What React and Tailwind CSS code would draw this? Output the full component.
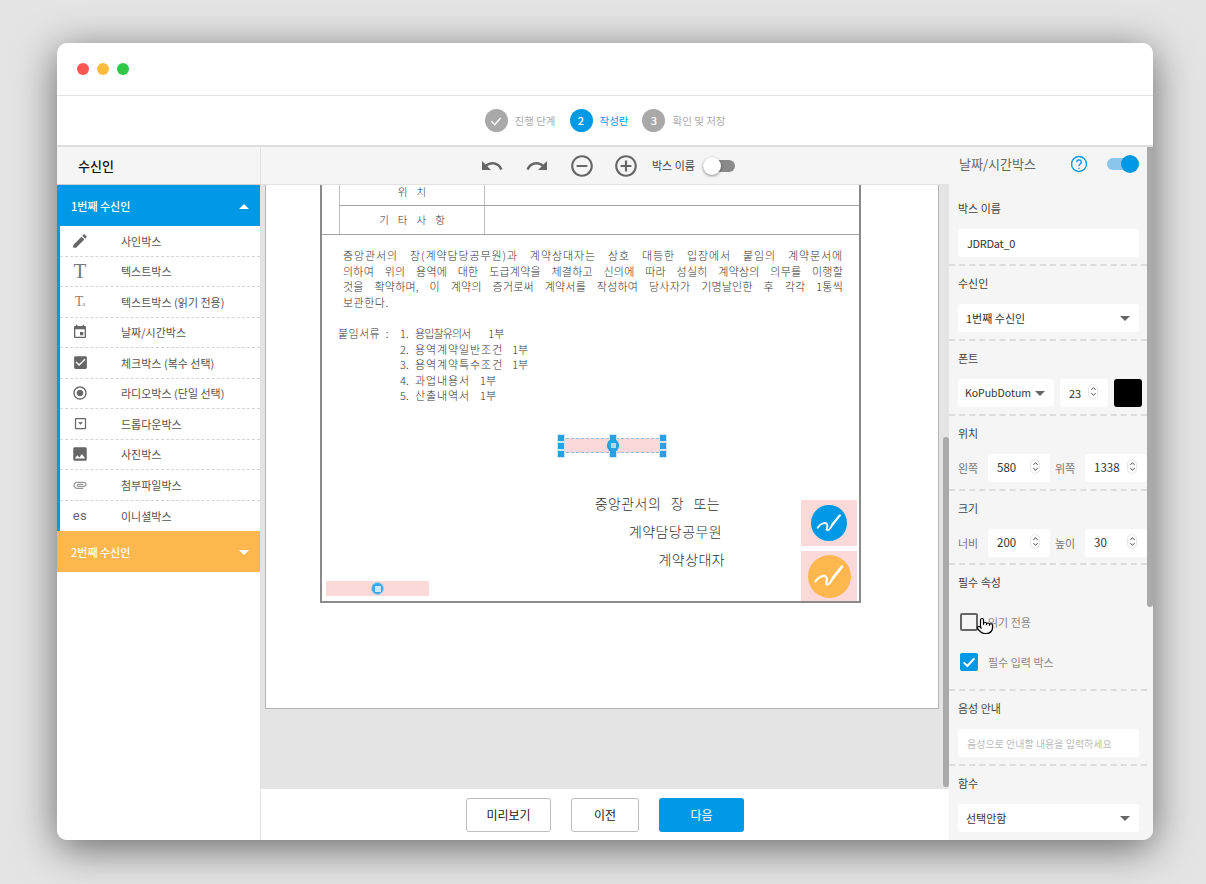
import React from "react";
import { Pointer } from "lucide-react";

const P = {
  edit: "M3 17.25V21h3.75L17.81 9.94l-3.75-3.75L3 17.25zM20.71 7.04c.39-.39.39-1.02 0-1.41l-2.34-2.34c-.39-.39-1.02-.39-1.41 0l-1.83 1.83 3.75 3.75 1.83-1.83z",
  event: "M17 12h-5v5h5v-5zM16 1v2H8V1H6v2H5c-1.11 0-1.99.9-1.99 2L3 19c0 1.1.89 2 2 2h14c1.1 0 2-.9 2-2V5c0-1.1-.9-2-2-2h-1V1h-2zm3 18H5V8h14v11z",
  check: "M19 3H5c-1.11 0-2 .9-2 2v14c0 1.1.89 2 2 2h14c1.11 0 2-.9 2-2V5c0-1.1-.89-2-2-2zm-9 14l-5-5 1.41-1.41L10 14.17l7.59-7.59L19 8l-9 9z",
  radio: "M12 7c-2.76 0-5 2.24-5 5s2.24 5 5 5 5-2.24 5-5-2.24-5-5-5zm0-5C6.48 2 2 6.48 2 12s4.48 10 10 10 10-4.48 10-10S17.52 2 12 2zm0 18c-4.42 0-8-3.58-8-8s3.58-8 8-8 8 3.58 8 8-3.58 8-8 8z",
  image: "M21 19V5c0-1.1-.9-2-2-2H5c-1.1 0-2 .9-2 2v14c0 1.1.9 2 2 2h14c1.1 0 2-.9 2-2zM8.5 13.5l2.5 3.01L14.5 12l4.5 6H5l3.5-4.5z",
  clip: "M2 12.5C2 9.46 4.46 7 7.5 7H18c2.21 0 4 1.79 4 4s-1.79 4-4 4H9.5C8.12 15 7 13.88 7 12.5S8.12 10 9.5 10H17v2H9.41c-.55 0-.55 1 0 1H18c1.1 0 2-.9 2-2s-.9-2-2-2H7.5C5.57 9 4 10.57 4 12.5S5.57 16 7.5 16H17v2H7.5C4.46 18 2 15.54 2 12.5z",
  undo: "M12.5 8c-2.65 0-5.05.99-6.9 2.6L2 7v9h9l-3.62-3.62c1.39-1.16 3.16-1.88 5.12-1.88 3.54 0 6.55 2.31 7.6 5.5l2.37-.78C21.08 11.03 17.15 8 12.5 8z",
  redo: "M18.4 10.6C16.55 8.99 14.15 8 11.5 8c-4.65 0-8.58 3.03-9.96 7.22L3.9 16c1.05-3.19 4.05-5.5 7.6-5.5 1.95 0 3.73.72 5.12 1.88L13 16h9V7l-3.6 3.6z",
  minus: "M7 11v2h10v-2H7zm5-9C6.48 2 2 6.48 2 12s4.48 10 10 10 10-4.48 10-10S17.52 2 12 2zm0 18c-4.41 0-8-3.59-8-8s3.59-8 8-8 8 3.59 8 8-3.59 8-8 8z",
  plus: "M13 7h-2v4H7v2h4v4h2v-4h4v-2h-4V7zm-1-5C6.48 2 2 6.48 2 12s4.48 10 10 10 10-4.48 10-10S17.52 2 12 2zm0 18c-4.41 0-8-3.59-8-8s3.59-8 8-8 8 3.59 8 8-3.59 8-8 8z",
  drop: "M19 3H5c-1.1 0-2 .9-2 2v14c0 1.1.9 2 2 2h14c1.1 0 2-.9 2-2V5c0-1.1-.9-2-2-2zm0 16H5V5h14v14zM8 10l4 4 4-4H8z",
};

const Mi = ({ d, className = "" }) => (
  <svg viewBox="0 0 24 24" className={className} fill="currentColor" aria-hidden="true"><path d={d} /></svg>
);

const items = [
  ["사인박스", <Mi d={P.edit} className="w-[18px] h-[18px] text-[#666]" />],
  ["텍스트박스", <span className="font-['Liberation_Serif',serif] text-[21px] leading-none text-[#777]">T</span>],
  ["텍스트박스 (읽기 전용)", <span className="flex items-end font-['Liberation_Serif',serif] text-[14px] leading-none text-[#888]">T<span className="text-[7px] leading-[9px] -ml-[1px]">a</span></span>],
  ["날짜/시간박스", <Mi d={P.event} className="w-[16px] h-[16px] text-[#666]" />],
  ["체크박스 (복수 선택)", <Mi d={P.check} className="w-[17px] h-[17px] text-[#666]" />],
  ["라디오박스 (단일 선택)", <Mi d={P.radio} className="w-[16px] h-[16px] text-[#666]" />],
  ["드롭다운박스", <Mi d={P.drop} className="w-[15px] h-[15px] text-[#666]" />],
  ["사진박스", <Mi d={P.image} className="w-[18px] h-[18px] text-[#666]" />],
  ["첨부파일박스", <Mi d={P.clip} className="w-[16px] h-[16px] text-[#999]" />],
  ["이니셜박스", <span className="font-['Roboto',sans-serif] text-[13px] leading-none tracking-[0.5px] text-[#666]">es</span>],
];

function Accordion({ label, color, up }) {
  return (
    <div className={`h-[41px] pt-[1px] flex items-center justify-between pl-[14px] pr-[11px] text-white text-[11px] font-medium ${color}`}>
      <span>{label}</span>
      <span className={`w-0 h-0 border-x-[5px] border-x-transparent ${up ? "border-b-[5px] border-b-white" : "border-t-[5px] border-t-white"}`} />
    </div>
  );
}

function Sidebar() {
  return (
    <div className="w-[204px] shrink-0 flex flex-col bg-white border-r border-[#e2e2e2]">
      <div className="h-[38px] shrink-0 flex items-center pl-[21px] bg-[#f5f5f5] border-b border-[#cfcfcf] text-[13px] font-medium text-[#111]">수신인</div>
      <Accordion label="1번째 수신인" color="bg-[#0099e5]" up />
      <div className="border-l-[3px] border-[#0099e5] flex flex-col">
        {items.map(([t, icon], i) => (
          <div key={t} className={`h-[30.5px] flex items-center text-[11px] text-[#555] ${i < items.length - 1 ? "border-b border-dashed border-[#d5d5d5]" : ""}`}>
            <span className="w-[41px] ml-[-2px] pl-[3px] flex justify-center shrink-0">{icon}</span>
            <span className="ml-[22px]">{t}</span>
          </div>
        ))}
      </div>
      <Accordion label="2번째 수신인" color="bg-[#fdb74f]" />
    </div>
  );
}

function Step({ n, label, active, done }) {
  return (
    <div className="flex items-center gap-[7px]">
      <span className={`w-[23px] h-[23px] rounded-full flex items-center justify-center text-white text-[11px] font-medium ${active ? "bg-[#0099e5]" : "bg-[#a9a9a9]"}`}>
        {done ? (
          <svg viewBox="0 0 24 24" className="w-[16px] h-[16px]" fill="none" stroke="currentColor" strokeWidth="2"><path d="M5 12.5l5 5 9-10" /></svg>
        ) : n}
      </span>
      <span className={`text-[10.5px] ${active ? "text-[#0099e5]" : "text-[#aaaaaa]"}`}>{label}</span>
    </div>
  );
}

function SignIcon({ className }) {
  return (
    <span className={`rounded-full flex items-center justify-center ${className}`}>
      <svg viewBox="0 0 24 24" className="w-[82%] h-[82%]" fill="none" stroke="white" strokeWidth="1.5" strokeLinecap="round">
        <path d="M3 16C5 13 9 11 10.5 13C12 15 9 18 11 18C13 18 14 15 15 13.5" />
        <path d="M15 13.5L21 6" strokeWidth="1.9" />
      </svg>
    </span>
  );
}

function Handle({ className }) {
  return <span className={`absolute w-[6px] h-[6px] bg-[#2aa0e4] outline outline-[#cbe7f7] ${className}`} />;
}

const attachments = [
  ["1.", "용입찰유의서", "tracking-[-0.9px]", "ml-[18px]"],
  ["2.", "용역계약일반조건", "tracking-[0.9px]", "ml-[9px]"],
  ["3.", "용역계약특수조건", "tracking-[0.9px]", "ml-[9px]"],
  ["4.", "과업내용서", "tracking-[0.9px]", "ml-[10px]"],
  ["5.", "산출내역서", "tracking-[0.9px]", "ml-[10px]"],
];

function Document() {
  return (
    <div className="relative ml-[54px] w-[541px] h-[418px] border-x-2 border-b-2 border-[#8a8a8a] font-['Noto_Sans_CJK_KR',sans-serif] font-light text-[#333]">
      <div className="ml-[17px] flex h-[21px] border-b border-[#a5a5a5] overflow-hidden">
        <div className="w-[146px] shrink-0 border-x border-[#c0c0c0] pl-[9px] text-center text-[10.5px] tracking-[9px] leading-[14px]">위치</div>
      </div>
      <div className="ml-[17px] flex h-[28px]">
        <div className="w-[146px] shrink-0 border-x border-[#c0c0c0] pl-[9px] flex items-center justify-center text-[10.5px] tracking-[9px]">기타사항</div>
      </div>
      <div className="border-t border-[#a5a5a5]" />
      <div className="mt-[13px] ml-[21px] w-[500px] text-[11px] leading-[15.5px]">
        <p className="tracking-[0.9px] text-justify [text-align-last:justify]">중앙관서의 장(계약담당공무원)과 계약상대자는 상호 대등한 입장에서 붙임의 계약문서에</p>
        <p className="tracking-[0.2px] text-justify [text-align-last:justify]">의하여 위의 용역에 대한 도급계약을 체결하고 신의에 따라 성실히 계약상의 의무를 이행할</p>
        <p className="tracking-[0.2px] text-justify [text-align-last:justify]">것을 확약하며, 이 계약의 증거로써 계약서를 작성하여 당사자가 기명날인한 후 각각 1통씩</p>
        <p className="tracking-[0.5px]">보관한다.</p>
      </div>
      <div className="mt-[16px] ml-[16px] text-[11px] leading-[15.5px]">
        {attachments.map(([n, name, track, gap], i) => (
          <div key={n} className="flex">
            <span className="w-[62px] shrink-0 tracking-[0.4px] whitespace-pre">{i === 0 ? "붙임서류  :" : ""}</span>
            <span className="w-[15px] shrink-0">{n}</span>
            <span className={track}>{name}</span>
            <span className={gap}>1부</span>
          </div>
        ))}
      </div>
      <div className="mt-[85px] flex flex-col items-end text-[14px] leading-[28px] tracking-[0.4px]">
        <span className="pr-[139px] [word-spacing:6px]">중앙관서의 장 또는</span>
        <span className="pr-[137px]">계약담당공무원</span>
        <span className="pr-[134px]">계약상대자</span>
      </div>

      <div className="absolute left-[239px] top-[253px] w-[103px] h-[15px] bg-[#fbd9d9] border border-dashed border-[#8fbfe0]">
        <Handle className="-left-[4px] -top-[4px]" />
        <Handle className="-left-[4px] top-[4px]" />
        <Handle className="-left-[4px] top-[12px]" />
        <Handle className="left-[48px] -top-[4px]" />
        <Handle className="left-[48px] top-[12px]" />
        <Handle className="-right-[3px] -top-[4px]" />
        <Handle className="-right-[3px] top-[4px]" />
        <Handle className="-right-[3px] top-[12px]" />
        <span className="absolute left-[45px] top-[0px] w-[12px] h-[13px] rounded-full bg-[#2aa0e4] flex items-center justify-center">
          <span className="w-[5px] h-[5px] bg-[#bcd6e8]" />
        </span>
      </div>

      <div className="absolute left-[479px] top-[315px] w-[56px] h-[46px] bg-[#fbd9d9] flex items-center justify-center">
        <SignIcon className="w-[36px] h-[36px] bg-[#0099e5]" />
      </div>
      <div className="absolute left-[479px] top-[366px] w-[56px] h-[50px] bg-[#fbd9d9] flex items-center justify-center">
        <SignIcon className="w-[43px] h-[43px] bg-[#fdb74f]" />
      </div>
      <div className="absolute left-[4px] top-[396px] w-[103px] h-[15px] bg-[#fbd9d9] flex items-center justify-center">
        <span className="w-[13px] h-[13px] rounded-full bg-[#3ea6e6] border border-[#9fd0ee] flex items-center justify-center">
          <span className="w-[6px] h-[6px] bg-[#cfe6f5]" />
        </span>
      </div>
    </div>
  );
}

function Center() {
  return (
    <div className="w-[688px] shrink-0 flex flex-col">
      <div className="h-[38px] shrink-0 flex items-center bg-[#f5f5f5] border-b border-[#e2e2e2] text-[#666]">
        <Mi d={P.undo} className="w-[24px] h-[24px] ml-[219px]" />
        <Mi d={P.redo} className="w-[24px] h-[24px] ml-[21px]" />
        <Mi d={P.minus} className="w-[26px] h-[26px] ml-[20px]" />
        <Mi d={P.plus} className="w-[26px] h-[26px] ml-[18px]" />
        <span className="ml-[13px] text-[11px] text-[#444]">박스 이름</span>
        <span className="relative ml-[8px] w-[32px] h-[12px] rounded-full bg-[#8a8a8a]">
          <span className="absolute left-0 -top-[3px] w-[18px] h-[18px] rounded-full bg-white shadow-[0_1px_3px_rgba(0,0,0,0.45)]" />
        </span>
      </div>
      <div className="h-[604px] shrink-0 flex bg-[#e4e4e4] pl-[4px]">
        <div className="w-[674px] h-[524px] shrink-0 bg-white border-x border-b border-[#b5b5b5] overflow-hidden">
          <Document />
        </div>
        <div className="ml-[4px] w-[6px] flex flex-col justify-end pb-[2px]">
          <div className="h-[350px] rounded-[3px] bg-[#a9a9a9]" />
        </div>
      </div>
      <div className="flex-1 flex items-center justify-center gap-[20px] bg-white">
        <button className="w-[85px] h-[34px] rounded-[3px] bg-white border border-[#bdbdbd] text-[12px] text-[#222]">미리보기</button>
        <button className="w-[68px] h-[34px] rounded-[3px] bg-white border border-[#bdbdbd] text-[12px] text-[#222]">이전</button>
        <button className="w-[85px] h-[34px] rounded-[3px] bg-[#0099e5] text-[12px] text-white">다음</button>
      </div>
    </div>
  );
}

const Label = ({ children }) => <div className="h-[16px] leading-[16px] text-[11px] text-[#444]">{children}</div>;
const Caret = () => <span className="w-0 h-0 border-x-[5px] border-x-transparent border-t-[5px] border-t-[#666]" />;

function Section({ label, children, className = "h-[75px]" }) {
  return (
    <div className={`shrink-0 pl-[9px] pt-[9px] border-b-2 border-dashed border-[#dcdcdc] ${className}`}>
      <Label>{label}</Label>
      {children}
    </div>
  );
}

function Select({ text }) {
  return (
    <div className="mt-[13px] w-[181px] h-[28px] rounded-[3px] bg-white flex items-center justify-between pl-[8px] pr-[9px] text-[11px] text-[#333]">
      <span>{text}</span><Caret />
    </div>
  );
}

function Spin() {
  return (
    <span className="-mt-[4px] w-[10px] h-[15px] rounded-full border border-[#e6e6e6] flex flex-col items-center justify-center">
      <svg viewBox="0 0 8 12" className="w-[7px] h-[11px]" fill="none" stroke="#444" strokeWidth="1.1"><path d="M1.5 4L4 1.8 6.5 4M1.5 8L4 10.2 6.5 8" /></svg>
    </span>
  );
}

function NumberBox({ value, w = "w-[62px]" }) {
  return (
    <div className={`${w} h-[28px] shrink-0 rounded-[3px] bg-white flex items-center justify-between pl-[9px] pr-[10px] text-[11.5px] text-[#333]`}>
      <span>{value}</span><Spin />
    </div>
  );
}

function PairRow({ a, av, b, bv }) {
  return (
    <div className="mt-[13px] h-[28px] flex items-center text-[11px] text-[#777]">
      <span className="w-[30px] shrink-0">{a}</span>
      <NumberBox value={av} />
      <span className="w-[30px] shrink-0 ml-[5px]">{b}</span>
      <NumberBox value={bv} />
    </div>
  );
}

function RightPanel() {
  return (
    <div className="relative w-[204px] shrink-0 flex bg-[#f5f5f5]">
      <div className="w-[198px] shrink-0 flex flex-col overflow-hidden">
        <div className="h-[44px] shrink-0 flex items-center pl-[10px] pb-[11px] text-[13px] text-[#666]">
          <span>날짜/시간박스</span>
          <svg viewBox="0 0 24 24" className="w-[18px] h-[18px] ml-[34px] text-[#0099e5]" fill="none" stroke="currentColor" strokeWidth="1.8">
            <circle cx="12" cy="12" r="10" />
            <path d="M9 9.5a3 3 0 1 1 4.6 2.5c-1 .7-1.6 1.2-1.6 2.5" />
            <path d="M12 17v1.6" />
          </svg>
          <span className="relative ml-[19px] w-[32px] h-[12px] rounded-full bg-[#8ac6ec]">
            <span className="absolute right-0 -top-[3px] w-[18px] h-[18px] rounded-full bg-[#0099e5]" />
          </span>
        </div>
        <Section label="박스 이름">
          <div className="mt-[13px] w-[181px] h-[28px] rounded-[3px] bg-white flex items-center pl-[9px] text-[11px] tracking-[-0.3px] text-[#333]">JDRDat_0</div>
        </Section>
        <Section label="수신인"><Select text="1번째 수신인" /></Section>
        <Section label="폰트">
          <div className="mt-[13px] flex items-center h-[28px]">
            <div className="w-[96px] h-[28px] rounded-[3px] bg-white flex items-center justify-between pl-[7px] pr-[9px] text-[10.5px] text-[#333]">
              <span>KoPubDotum</span><Caret />
            </div>
            <div className="ml-[6px] w-[48px] h-[28px] rounded-[3px] bg-white flex items-center justify-between pl-[9px] pr-[10px] text-[11px] text-[#333]">
              <span>23</span><Spin />
            </div>
            <div className="ml-[6px] w-[28px] h-[28px] rounded-[3px] bg-black" />
          </div>
        </Section>
        <Section label="위치"><PairRow a="왼쪽" av="580" b="위쪽" bv="1338" /></Section>
        <Section label="크기" className="h-[74px]"><PairRow a="너비" av="200" b="높이" bv="30" /></Section>
        <Section label="필수 속성" className="h-[126px]">
          <div className="mt-[22px] flex items-center h-[20px] text-[11px] text-[#888]">
            <span className="ml-[2px] w-[18px] h-[18px] rounded-[2px] border-2 border-[#666] bg-[#f5f5f5]" />
            <span className="ml-[10px]">읽기 전용</span>
          </div>
          <div className="mt-[20px] flex items-center h-[20px] text-[11px] text-[#888]">
            <span className="ml-[2px] w-[18px] h-[18px] rounded-[2px] bg-[#0099e5] flex items-center justify-center">
              <svg viewBox="0 0 24 24" className="w-[16px] h-[16px]" fill="none" stroke="white" strokeWidth="3"><path d="M4 12.5l5.5 5.5L20 6.5" /></svg>
            </span>
            <span className="ml-[10px]">필수 입력 박스</span>
          </div>
        </Section>
        <Section label="음성 안내">
          <div className="mt-[13px] w-[181px] h-[28px] rounded-[3px] bg-white flex items-center pl-[9px] text-[10px] text-[#bbbbbb]">음성으로 안내할 내용을 입력하세요</div>
        </Section>
        <div className="pl-[9px] pt-[9px]">
          <Label>함수</Label>
          <Select text="선택안함" />
        </div>
      </div>
      <div className="w-[6px] shrink-0">
        <div className="h-[460px] rounded-b-[3px] bg-[#a9a9a9]" />
      </div>
      <Pointer className="absolute left-[27px] top-[470px] w-[18px] h-[18px] text-black" fill="white" strokeWidth={1.6} />
    </div>
  );
}

export default function App() {
  return (
    <div className="w-[1206px] h-[884px] overflow-hidden bg-[#e4e4e4] pl-[57px] pt-[43px] font-['Noto_Sans_CJK_KR','Noto_Sans',sans-serif]">
      <div className="w-[1096px] h-[797px] rounded-[10px] overflow-hidden bg-white flex flex-col shadow-[0_8px_40px_rgba(0,0,0,0.55)]">
        <div className="h-[53px] shrink-0 flex items-center gap-[8px] pl-[20px] border-b border-[#e2e2e2]">
          <span className="w-[12px] h-[12px] rounded-full bg-[#fc5753]" />
          <span className="w-[12px] h-[12px] rounded-full bg-[#fdbc40]" />
          <span className="w-[12px] h-[12px] rounded-full bg-[#33c748]" />
        </div>
        <div className="h-[51px] shrink-0 flex items-center justify-center gap-[14px] border-b-2 border-[#dedede]">
          <Step label="진행 단계" done />
          <Step n="2" label="작성란" active />
          <Step n="3" label="확인 및 저장" />
        </div>
        <div className="flex-1 flex min-h-0">
          <Sidebar />
          <Center />
          <RightPanel />
        </div>
      </div>
    </div>
  );
}
